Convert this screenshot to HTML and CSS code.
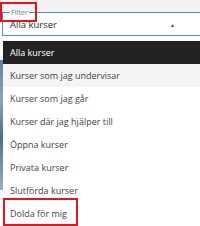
FILE: index.html
```html
<!DOCTYPE html>
<html lang="sv">
<head>
    <meta charset="UTF-8">
    <title>Filter</title>
    <link rel="stylesheet" href="styles.css">
</head>
<body>
    <div class="page">
        <fieldset class="filter">
            <legend class="legend-mark">Filter</legend>
            <div class="select">
                <span>Alla kurser</span>
                <span class="arrow">&#9650;</span>
            </div>
        </fieldset>

        <div class="dropdown-row">
            <div class="bg-strip"></div>
            <ul class="options">
                <li class="selected">Alla kurser</li>
                <li class="hover">Kurser som jag undervisar</li>
                <li>Kurser som jag går</li>
                <li>Kurser där jag hjälper till</li>
                <li>Öppna kurser</li>
                <li>Privata kurser</li>
                <li>Slutförda kurser</li>
                <li class="item-mark">Dolda för mig</li>
            </ul>
        </div>
    </div>
</body>
</html>
```

FILE: styles.css
```css
* {
    margin: 0;
    padding: 0;
    box-sizing: border-box;
}

body {
    width: 200px;
    height: 226px;
    overflow: hidden;
    background: #fff;
    font-family: "Open Sans", "Liberation Sans", sans-serif;
    color: #333;
}

.page {
    background: linear-gradient(#f3f3f3 0, #f3f3f3 12px, #fff 12px);
    padding-top: 6px;
}

.filter {
    margin-left: 2px;
    border: 1px solid #4a90e2;
    border-right: none;
    padding: 0 0 0 7px;
    height: 30px;
}

.filter legend {
    padding: 0 1px;
    font-size: 8px;
    letter-spacing: -0.3px;
    line-height: 12px;
    color: #888;
}

/* rode ramar (markering) */
.legend-mark {
    position: relative;
}

.legend-mark::before {
    content: '';
    position: absolute;
    left: -10px;
    right: -8px;
    top: -4px;
    bottom: -4px;
    border: 2px solid #e8141c;
}

.select {
    display: flex;
    align-items: center;
    justify-content: space-between;
    height: 17px;
    padding-bottom: 4px;
    font-size: 9.5px;
    color: #333;
}

.arrow {
    font-size: 5px;
    margin-right: 25px;
    color: #444;
}

.dropdown-row {
    display: flex;
    margin-top: 5px;
}

.bg-strip {
    width: 3px;
    height: 130px;
    margin-top: 19px;
    background: linear-gradient(#5d7fa0, #8aa5bc 30%, #4f6f8f 60%, #9bb0c2);
}

.options {
    flex: 1;
    list-style: none;
    font-size: 9px;
}

.options li {
    height: 23px;
    line-height: 23px;
    padding-left: 7px;
    color: #444;
}

.options li.selected {
    background: #232323;
    color: #fff;
}

.options li.hover {
    background: #f5f5f5;
}

.options li.item-mark {
    position: relative;
}

.item-mark::before {
    content: '';
    position: absolute;
    left: 0;
    top: -4px;
    width: 71px;
    height: 24px;
    border: 2px solid #e8141c;
}
```
